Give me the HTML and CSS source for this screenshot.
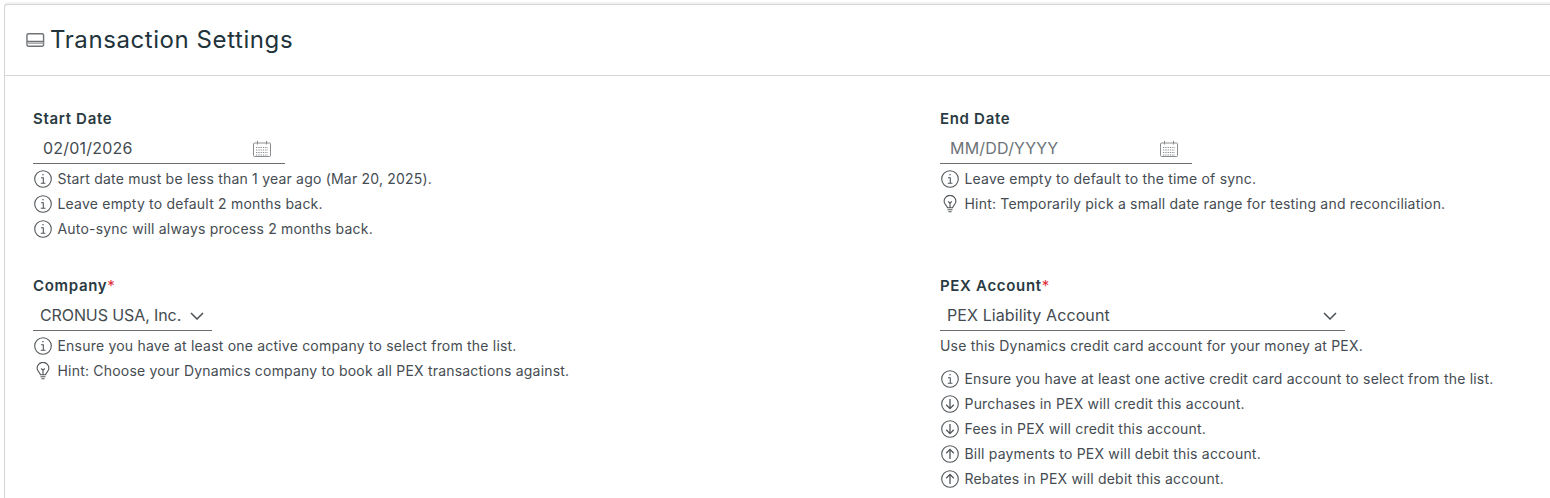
FILE: index.html
```html
<!DOCTYPE html>
<html lang="en">
<head>
<meta charset="utf-8">
<title>Transaction Settings</title>
<link rel="stylesheet" href="styles.css">
</head>
<body>
<svg class="sprites" width="0" height="0" aria-hidden="true">
  <symbol id="i-info" viewBox="0 0 18 18"><circle cx="9" cy="9" r="8.300" fill="none" stroke="currentColor" stroke-width="1.100"/><path d="M7 7.700H9.300V13.200M6.800 13.300H11.400M8.200 4.800H9.800" fill="none" stroke="currentColor" stroke-width="1.100"/></symbol>
  <symbol id="i-hint" viewBox="0 0 18 18"><path d="M6.400 12.800C6.200 10.800 3.100 9.600 3.100 6.300A5.900 5.900 0 0 1 14.900 6.300C14.900 9.600 11.800 10.800 11.600 12.800ZM6.500 14.800H11.500M7.400 16.800H10.600M7.200 6.400L9 8.400L10.800 6.400M9 8.400V12.800" fill="none" stroke="currentColor" stroke-width="1.100"/></symbol>
  <symbol id="i-down" viewBox="0 0 18 18"><circle cx="9" cy="9" r="8.300" fill="none" stroke="currentColor" stroke-width="1.100"/><path d="M9 4V13.600M5.200 9.800L9 13.600L12.800 9.800" fill="none" stroke="currentColor" stroke-width="1.300"/></symbol>
  <symbol id="i-up" viewBox="0 0 18 18"><circle cx="9" cy="9" r="8.300" fill="none" stroke="currentColor" stroke-width="1.100"/><path d="M9 14V4.400M5.200 8.200L9 4.400L12.800 8.200" fill="none" stroke="currentColor" stroke-width="1.300"/></symbol>
  <symbol id="i-cal" viewBox="0 0 20 18"><path d="M2.500 3H17.500A1 1 0 0 1 18.500 4V15.500A1 1 0 0 1 17.500 16.500H2.500A1 1 0 0 1 1.500 15.500V4A1 1 0 0 1 2.500 3Z" fill="none" stroke="#8a8d90"/><path d="M5.500 1V4.500M14.500 1V4.500" fill="none" stroke="#8a8d90"/><path d="M4 7.500H16M4 10H16M4 12.500H16M4 15H16" fill="none" stroke="#8a8d90" stroke-dasharray="1.300 1"/></symbol>
</svg>
<main class="card">
  <header class="card-header">
    <svg class="title-icon" viewBox="0 0 20 16" aria-hidden="true"><rect x="1" y="1.500" width="17.500" height="13" rx="1.500" fill="none" stroke="#6f7376" stroke-width="1.500"/><path d="M1 9.500H18.500" fill="none" stroke="#6f7376" stroke-width="1.500"/><path d="M1 11.500H18.500" fill="none" stroke="#a9abad" stroke-width="1.500"/></svg>
    <h1 class="title">Transaction Settings</h1>
  </header>
  <div class="form">
    <section class="field">
      <h2 class="label">Start Date</h2>
      <div class="control date"><span class="value">02/01/2026</span><svg class="cal"><use href="#i-cal"/></svg></div>
      <ul class="hints">
        <li><svg class="ico"><use href="#i-info"/></svg>Start date must be less than 1 year ago (Mar 20, 2025).</li>
        <li><svg class="ico"><use href="#i-info"/></svg>Leave empty to default 2 months back.</li>
        <li><svg class="ico"><use href="#i-info"/></svg>Auto-sync will always process 2 months back.</li>
      </ul>
    </section>
    <section class="field">
      <h2 class="label">End Date</h2>
      <div class="control date"><span class="value placeholder">MM/DD/YYYY</span><svg class="cal"><use href="#i-cal"/></svg></div>
      <ul class="hints">
        <li><svg class="ico"><use href="#i-info"/></svg>Leave empty to default to the time of sync.</li>
        <li><svg class="ico"><use href="#i-hint"/></svg>Hint: Temporarily pick a small date range for testing and reconciliation.</li>
      </ul>
    </section>
    <section class="field">
      <h2 class="label">Company<span class="req">*</span></h2>
      <div class="control select company"><span class="value">CRONUS USA, Inc.</span><svg class="chev" viewBox="0 0 14 8"><path d="M1 1L7 7L13 1" fill="none" stroke="currentColor" stroke-width="1.500"/></svg></div>
      <ul class="hints">
        <li><svg class="ico"><use href="#i-info"/></svg>Ensure you have at least one active company to select from the list.</li>
        <li><svg class="ico"><use href="#i-hint"/></svg>Hint: Choose your Dynamics company to book all PEX transactions against.</li>
      </ul>
    </section>
    <section class="field">
      <h2 class="label">PEX Account<span class="req">*</span></h2>
      <div class="control select account"><span class="value">PEX Liability Account</span><svg class="chev" viewBox="0 0 14 8"><path d="M1 1L7 7L13 1" fill="none" stroke="currentColor" stroke-width="1.500"/></svg></div>
      <p class="help">Use this Dynamics credit card account for your money at PEX.</p>
      <ul class="hints">
        <li><svg class="ico"><use href="#i-info"/></svg>Ensure you have at least one active credit card account to select from the list.</li>
        <li><svg class="ico"><use href="#i-down"/></svg>Purchases in PEX will credit this account.</li>
        <li><svg class="ico"><use href="#i-down"/></svg>Fees in PEX will credit this account.</li>
        <li><svg class="ico"><use href="#i-up"/></svg>Bill payments to PEX will debit this account.</li>
        <li><svg class="ico"><use href="#i-up"/></svg>Rebates in PEX will debit this account.</li>
      </ul>
    </section>
  </div>
</main>
</body>
</html>
```
FILE: styles.css
```css
html, body { height: 100%; overflow: hidden; }
body { margin: 0; padding: 4px 0 0 4px; background: #fff; font-family: "Inter", "Liberation Sans", sans-serif; color: #454c52; box-sizing: border-box; }
.sprites { position: absolute; }
.card { height: 494px; overflow: hidden; border: 1px solid #d4d4d4; border-right: 0; border-bottom: 0; border-radius: 4px 0 0 0; box-shadow: 0 -2px 0 #f2f2f2; box-sizing: border-box; }
.card-header { height: 71px; border-bottom: 1px solid #d7d7d7; display: flex; align-items: center; padding-left: 21px; gap: 5px; box-sizing: border-box; }
.title-icon { width: 19px; height: 16px; }
.title { margin: 0; font-size: 24px; font-weight: 400; color: #21333b; line-height: 32px; letter-spacing: .58px; }
.form { display: grid; grid-template-columns: 907px 1fr; padding: 33px 0 0 28px; row-gap: 35px; }
.label { margin: 0; font-size: 15px; line-height: 20px; font-weight: 600; color: #2a3a42; letter-spacing: .68px; }
.req { color: #e02f3b; font-weight: 400; }
.control { display: flex; align-items: center; border-bottom: 1px solid #6a6e71; height: 30px; box-sizing: border-box; font-size: 16px; color: #444b50; margin-top: 5px; }
.date { width: 252px; padding: 0 12px 2px 10px; justify-content: space-between; letter-spacing: .2px; }
.placeholder { color: #6d7378; }
.cal { width: 20px; height: 18px; margin-right: 1px; margin-top: 3px; }
.select { padding: 0 8px 1px 7px; justify-content: space-between; }
.company { width: 179px; letter-spacing: -.1px; }
.account { width: 405px; letter-spacing: .1px; }
.chev { width: 14px; height: 8px; color: #4a5157; margin-top: 1px; }
.hints { list-style: none; margin: 2px 0 0; padding: 0; }
.hints li { display: flex; align-items: center; height: 25px; font-size: 14px; letter-spacing: .2px; white-space: nowrap; }
.ico { width: 18px; height: 18px; margin: 0 5.500px 0 1px; flex: none; color: #50565a; }
.help { margin: 5px 0 0; font-size: 14px; letter-spacing: .2px; line-height: 20px; height: 21px; white-space: nowrap; }
.help + .hints { margin-top: 9px; }
```
